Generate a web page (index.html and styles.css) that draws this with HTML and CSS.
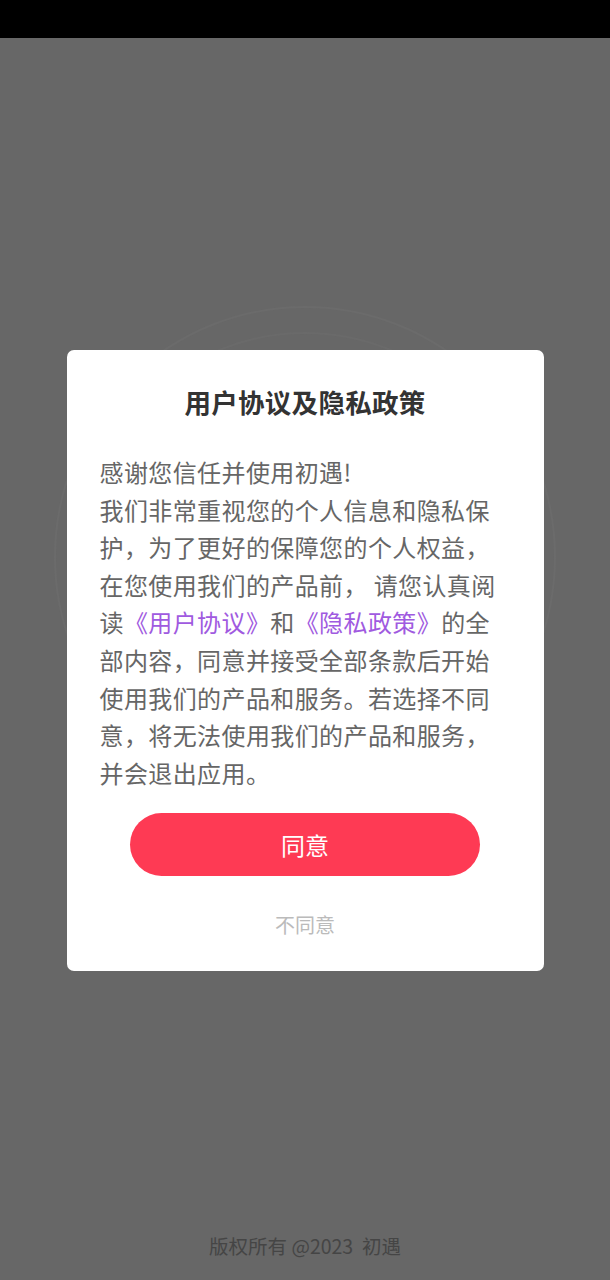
FILE: index.html
```html
<!DOCTYPE html>
<html lang="zh-CN">
<head>
<meta charset="utf-8">
<title>用户协议及隐私政策</title>
<link rel="stylesheet" href="styles.css">
</head>
<body>
<div class="statusbar"></div>
<main class="screen">
  <svg class="bg-rings" width="520" height="520" viewBox="0 0 520 520" aria-hidden="true">
    <circle cx="260" cy="260" r="250" fill="none" stroke="#6b6b6b" stroke-width="2"/>
    <circle cx="260" cy="260" r="224" fill="none" stroke="#6a6a6a" stroke-width="2"/>
  </svg>
  <section class="dialog">
    <h1 class="dialog-title">用户协议及隐私政策</h1>
    <p class="dialog-text">感谢您信任并使用初遇!<br>我们非常重视您的个人信息和隐私保护，为了更好的保障您的个人权益，在您使用我们的产品前， 请您认真阅读<span class="link">《用户协议》</span>和<span class="link">《隐私政策》</span>的全部内容，同意并接受全部条款后开始使用我们的产品和服务。若选择不同意，将无法使用我们的产品和服务，并会退出应用。</p>
    <button class="btn-agree" type="button">同意</button>
    <button class="btn-disagree" type="button">不同意</button>
  </section>
  <footer class="copyright">版权所有 @2023&nbsp; 初遇</footer>
</main>
</body>
</html>
```
FILE: styles.css
```css
* { box-sizing: border-box; }
html, body {
  margin: 0;
  padding: 0;
}
body {
  width: 610px;
  height: 1280px;
  font-family: "Noto Sans CJK SC", "Noto Sans", sans-serif;
  background: #676767;
  display: flex;
  flex-direction: column;
  overflow: hidden;
  text-spacing-trim: space-all;
}
.statusbar {
  height: 38px;
  background: #000000;
  flex: none;
}
.screen {
  position: relative;
  flex: 1;
  display: flex;
  flex-direction: column;
  align-items: center;
  padding-top: 312px;
  background: #676767;
}
.bg-rings {
  position: absolute;
  left: 45px;
  top: 259px;
}
.dialog {
  position: relative;
  width: 477px;
  background: #ffffff;
  border-radius: 7px;
  padding: 34px 33px 32px;
  display: flex;
  flex-direction: column;
  align-items: center;
}
.dialog-title {
  margin: 0;
  font-size: 26.5px;
  line-height: 36px;
  font-weight: 700;
  color: #333333;
  letter-spacing: 0.3px;
}
.dialog-text {
  margin: 33px 0 0;
  align-self: stretch;
  font-size: 24px;
  letter-spacing: 0.4px;
  line-height: 37.6px;
  color: #666666;
}
.link {
  color: #a05ae0;
}
.btn-agree {
  margin-top: 22px;
  width: 350px;
  height: 63px;
  border: none;
  border-radius: 32px;
  background: #fe3a54;
  color: #ffffff;
  font-family: inherit;
  font-size: 24px;
  padding: 0;
}
.btn-disagree {
  margin-top: 35px;
  border: none;
  background: none;
  padding: 0;
  font-family: inherit;
  font-size: 20px;
  line-height: 28px;
  color: #bbbbbb;
}
.copyright {
  margin-top: auto;
  padding-bottom: 21px;
  font-size: 19.5px;
  line-height: 26px;
  color: #454545;
  white-space: pre;
}
```
